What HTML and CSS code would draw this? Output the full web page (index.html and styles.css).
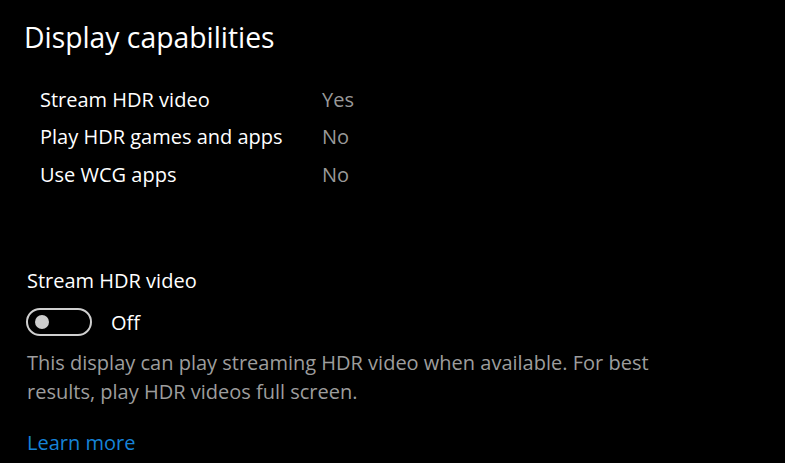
FILE: index.html
```html
<!DOCTYPE html>
<html lang="en">
<head>
<meta charset="utf-8">
<title>Display capabilities</title>
<link rel="stylesheet" href="styles.css">
</head>
<body>
<main class="page">
  <h1 class="title">Display capabilities</h1>
  <div class="caps">
    <div class="cap-row"><span class="cap-name">Stream HDR video</span><span class="cap-value">Yes</span></div>
    <div class="cap-row"><span class="cap-name">Play HDR games and apps</span><span class="cap-value">No</span></div>
    <div class="cap-row"><span class="cap-name">Use WCG apps</span><span class="cap-value">No</span></div>
  </div>
  <div class="setting-label">Stream HDR video</div>
  <div class="toggle-row">
    <span class="toggle"><span class="knob"></span></span>
    <span class="toggle-state">Off</span>
  </div>
  <p class="desc">This display can play streaming HDR video when available. For best results, play HDR videos full screen.</p>
  <a class="link" href="#">Learn more</a>
</main>
</body>
</html>
```
FILE: styles.css
```css
html, body {
  margin: 0;
  padding: 0;
  background: #000;
}
body {
  width: 785px;
  height: 463px;
  overflow: hidden;
  font-family: "Open Sans", "Noto Sans", sans-serif;
  color: #fff;
}
.page {
  display: flex;
  flex-direction: column;
  align-items: flex-start;
  padding: 17px 0 0 24px;
}
.title {
  margin: 0;
  font-size: 28.3px;
  font-weight: 400;
  line-height: 40px;
}
.caps {
  margin-top: 23.5px;
  padding-left: 16px;
  display: flex;
  flex-direction: column;
}
.cap-row {
  display: grid;
  grid-template-columns: 282px auto;
  font-size: 20px;
  line-height: 37.5px;
}
.cap-value {
  color: #999;
}
.setting-label {
  margin-top: 74px;
  margin-left: 3px;
  font-size: 20px;
  line-height: 28px;
}
.toggle-row {
  margin-top: 12.5px;
  margin-left: 2px;
  display: flex;
  align-items: center;
  gap: 19px;
  height: 28px;
}
.toggle {
  box-sizing: border-box;
  width: 66px;
  height: 28px;
  border: 2px solid #cfcfcf;
  border-radius: 14px;
  display: flex;
  align-items: center;
  padding-left: 7px;
}
.knob {
  width: 14px;
  height: 14px;
  border-radius: 50%;
  background: #cdcdcd;
}
.toggle-state {
  font-size: 20px;
  line-height: 28px;
  padding-top: 3px;
}
.desc {
  margin: 12px 0 0 3px;
  width: 660px;
  font-size: 20px;
  line-height: 29px;
  color: #9d9d9d;
}
.link {
  margin-top: 23px;
  margin-left: 3px;
  font-size: 20px;
  line-height: 28px;
  color: #1683d8;
  text-decoration: none;
}
```
